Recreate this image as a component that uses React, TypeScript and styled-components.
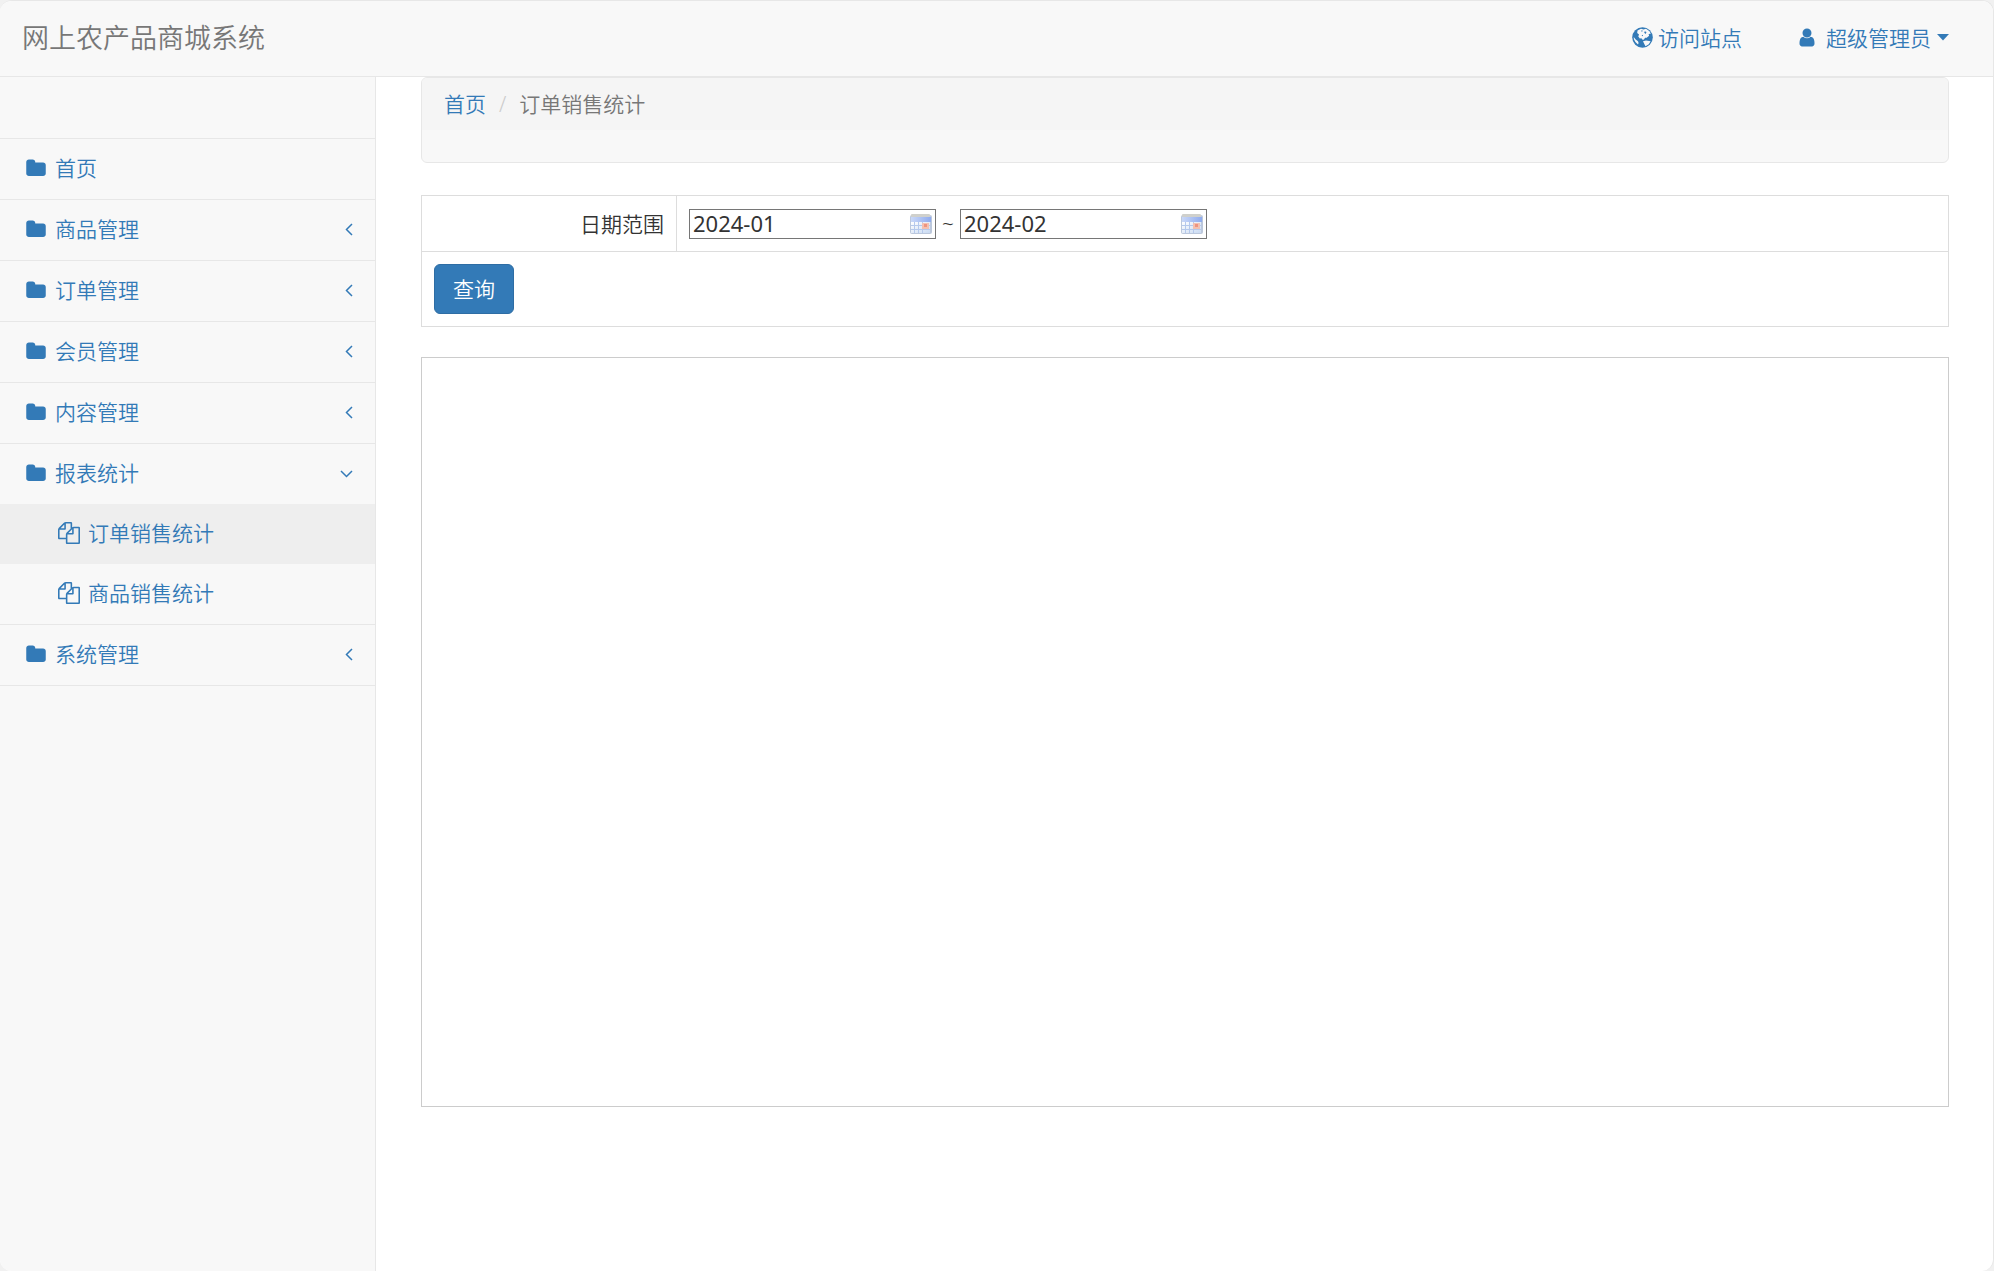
import React, { useState } from "react";
import styled, { createGlobalStyle } from "styled-components";

const blue = "#337ab7";
const line = "#e7e7e7";
const cellLine = "#dddddd";

const GlobalStyle = createGlobalStyle`
  *, *::before, *::after { box-sizing: border-box; }
  body {
    margin: 0;
    background: #f1f1f1;
    color: #333;
    font-family: "Noto Sans", "Noto Sans CJK SC", sans-serif;
    font-weight: 350;
    font-size: 21px;
    line-height: 30px;
  }
`;

const Page = styled.div`
  min-height: 100vh;
  display: flex;
  flex-direction: column;
  background: #fff;
  border: 1px solid ${line};
  border-width: 1px 1px 0 0;
  border-radius: 12px;
  overflow: hidden;
`;

const Header = styled.header`
  height: 76px;
  flex: none;
  display: flex;
  align-items: center;
  justify-content: space-between;
  padding: 0 44px 2px 22px;
  background: #f8f8f8;
  border-bottom: 1px solid ${line};
`;

const Brand = styled.a`
  color: #777;
  font-size: 27px;
  text-decoration: none;
`;

const TopLinks = styled.nav`
  display: flex;
  align-items: center;
  gap: 56px;
`;

const TopLink = styled.a`
  display: flex;
  align-items: center;
  gap: 5px;
  color: ${blue};
  text-decoration: none;
`;

const UserButton = styled.button`
  display: flex;
  align-items: center;
  gap: 6px;
  padding: 0;
  border: 0;
  background: none;
  color: ${blue};
  font: inherit;
  cursor: pointer;
  svg:first-child { margin-right: 4px; }
`;

const Body = styled.div`
  flex: 1;
  display: flex;
`;

const Sidebar = styled.aside`
  width: 376px;
  flex: none;
  background: #f8f8f8;
  border-right: 1px solid ${line};
`;

const Menu = styled.ul`
  margin: 0;
  padding: 0;
  list-style: none;
`;

const MenuItem = styled.li`
  border-bottom: 1px solid ${line};
`;

const SearchSlot = styled.li`
  height: 62px;
  border-bottom: 1px solid ${line};
`;

const MenuLink = styled.a<{ $sub?: boolean; $active?: boolean }>`
  height: 60px;
  display: flex;
  align-items: center;
  gap: ${(p) => (p.$sub ? 8 : 9)}px;
  padding: 0 22px 2px ${(p) => (p.$sub ? 58 : 26)}px;
  background: ${(p) => (p.$active ? "#eeeeee" : "transparent")};
  color: ${blue};
  text-decoration: none;
`;

const MenuText = styled.span`
  flex: 1;
`;

const Main = styled.main`
  flex: 1;
  min-width: 0;
  padding: 0 44px 0 45px;
`;

const CrumbBar = styled.nav`
  height: 86px;
  margin-bottom: 32px;
  background: #f8f8f8;
  border: 1px solid ${line};
  border-radius: 6px;
  overflow: hidden;
`;

const Crumbs = styled.ol`
  display: flex;
  margin: 0;
  padding: 11px 22px;
  list-style: none;
  background: #f5f5f5;
  color: #777;
  li + li::before {
    content: "/";
    padding: 0 13px;
    color: #ccc;
  }
  a {
    color: ${blue};
    text-decoration: none;
  }
`;

const FilterTable = styled.table`
  width: 100%;
  margin-bottom: 30px;
  border-collapse: collapse;
  th, td {
    height: 56px;
    padding: 12px;
    border: 1px solid ${cellLine};
    text-align: left;
  }
  th {
    width: 255px;
    font-weight: inherit;
    text-align: right;
  }
`;

const Range = styled.div`
  display: flex;
  align-items: center;
  gap: 6px;
`;

const DateField = styled.label`
  width: 247px;
  height: 30px;
  display: flex;
  align-items: center;
  padding: 0 3px 0 3px;
  border: 1px solid #767676;
`;

const DateInput = styled.input`
  flex: 1;
  min-width: 0;
  height: 28px;
  padding: 0 0 2px;
  border: 0;
  outline: 0;
  background: none;
  color: #333;
  font: inherit;
  font-size: 22px;
  font-weight: 400;
`;

const QueryButton = styled.button`
  height: 50px;
  padding: 0 18px;
  border: 1px solid #2e6da4;
  border-radius: 6px;
  background: ${blue};
  color: #fff;
  font: inherit;
  cursor: pointer;
`;

const ChartBox = styled.section`
  height: 750px;
  border: 1px solid #ccc;
`;

const FolderIcon = () => (
  <svg width="20" height="21" viewBox="64 0 1664 1792" fill="currentColor" aria-hidden="true">
    <path d="M1728 608v704q0 92-66 158t-158 66h-1216q-92 0-158-66t-66-158v-960q0-92 66-158t158-66h320q92 0 158 66t66 158v32h672q92 0 158 66t66 158z" />
  </svg>
);

const FilesIcon = () => (
  <svg width="22" height="22" viewBox="0 0 1792 1792" fill="currentColor" aria-hidden="true">
    <path d="M1696 384q40 0 68 28t28 68v1216q0 40-28 68t-68 28h-960q-40 0-68-28t-28-68v-288h-544q-40 0-68-28t-28-68v-672q0-40 20-88t48-76l408-408q28-28 76-48t88-20h416q40 0 68 28t28 68v328q68-40 128-40h416zm-544 213l-299 299h299v-299zm-640-384l-299 299h299v-299zm196 647l316-316v-416h-384v416q0 40-28 68t-68 28h-416v640h512v-256q0-40 20-88t48-76zm956 804v-1152h-384v416q0 40-28 68t-68 28h-416v640h896z" />
  </svg>
);

const UserIcon = () => (
  <svg width="18" height="21" viewBox="192 0 1408 1792" fill="currentColor" aria-hidden="true">
    <path d="M1536 1399q0 109-62.5 187t-150.5 78h-854q-88 0-150.5-78t-62.5-187q0-85 8.5-160.5t31.5-152 58.5-131 94-89 134.5-34.5q131 128 313 128t313-128q76 0 134.5 34.5t94 89 58.5 131 31.5 152 8.5 160.5zm-256-887q0 159-112.5 271.5t-271.5 112.5-271.5-112.5-112.5-271.5 112.5-271.5 271.5-112.5 271.5 112.5 112.5 271.5z" />
  </svg>
);

const GlobeIcon = () => (
  <svg width="21" height="21" viewBox="0 0 21 21" aria-hidden="true">
    <circle cx="10.500" cy="10.500" r="10.300" fill={blue} />
    <path fill="#f8f8f8" d="M5.500 3.500l3.500-1.700 2.500.6 2.500-.6 3.500 2.400 1.300 2.600-2.200.2.500 1.800-2.400 1.900-1.600 0-1.400 2-1.600-.2-.6-1.300-1.700.4-1.500-2.200.7-2-1.800-1.400zM11 14.200l3-.7 4.600.8-1.800 3-3.300 2-1.200-2.300zM1.700 10l2 2.600 2.300 1.600.6 1.800-.6 1.400-2.600-2.400-1.500-2.800z" />
    <path fill={blue} d="M9 3.800l1.600-.5-.5 1.600zM12.800 4.200l1.700.8-.8 2-1.500-1.200zM9.500 8.500l1.600-.8-.2 1.500z" />
  </svg>
);

const CaretIcon = () => (
  <svg width="12" height="7" viewBox="0 0 12 7" fill="currentColor" aria-hidden="true">
    <path d="M0 0h12L6 6.500z" />
  </svg>
);

const AngleIcon = ({ open }: { open?: boolean }) => (
  <svg width={open ? 13 : 8} height="13" viewBox={open ? "0 0 13 13" : "0 0 8 13"} fill="none" stroke="currentColor" strokeWidth="1.500" aria-hidden="true">
    <path d={open ? "M1 4l5.500 5.500L12 4" : "M7 1L1.500 6.500 7 12"} />
  </svg>
);

const CalendarIcon = () => (
  <svg width="22" height="20" viewBox="0 0 22 20" aria-hidden="true">
    <defs>
      <linearGradient id="sheet" x1="0" y1="0" x2="1" y2="1">
        <stop offset="0" stopColor="#ffffff" />
        <stop offset="1" stopColor="#c9daf2" />
      </linearGradient>
      <linearGradient id="band" x1="0" y1="0" x2="1" y2="0">
        <stop offset="0" stopColor="#c9d8f8" />
        <stop offset="1" stopColor="#8fabee" />
      </linearGradient>
    </defs>
    <rect x="0" y="1" width="22" height="19" rx="2" fill="#bcc8dc" />
    <rect x="1" y="0" width="19" height="3" rx="1" fill="#cfd0cc" />
    <rect x="1" y="3" width="20" height="5" fill="url(#band)" />
    <rect x="1" y="8" width="19" height="11" fill="url(#sheet)" />
    <path d="M4.500 8v11M8.500 8v11M12.500 8v11M1 11.500h19M1 15.500h19" stroke="#b5c9ec" />
    <rect x="12" y="9" width="7" height="6" fill="#f4c0b0" />
    <rect x="14" y="10" width="3" height="3" fill="#ee9480" />
  </svg>
);

type Entry = { label: string; children?: string[] };

const entries: Entry[] = [
  { label: "首页" },
  { label: "商品管理", children: [] },
  { label: "订单管理", children: [] },
  { label: "会员管理", children: [] },
  { label: "内容管理", children: [] },
  { label: "报表统计", children: ["订单销售统计", "商品销售统计"] },
  { label: "系统管理", children: [] },
];

const current = "订单销售统计";

function MonthField({ label, initial }: { label: string; initial: string }) {
  const [value, setValue] = useState(initial);
  return (
    <DateField>
      <DateInput aria-label={label} value={value} onChange={(e) => setValue(e.target.value)} />
      <CalendarIcon />
    </DateField>
  );
}

export default function App() {
  return (
    <>
      <GlobalStyle />
      <Page>
        <Header>
          <Brand href="#">网上农产品商城系统</Brand>
          <TopLinks>
            <TopLink href="#"><GlobeIcon />访问站点</TopLink>
            <UserButton type="button"><UserIcon />超级管理员<CaretIcon /></UserButton>
          </TopLinks>
        </Header>
        <Body>
          <Sidebar>
            <Menu>
              <SearchSlot />
              {entries.map(({ label, children }) => (
                <MenuItem key={label}>
                  <MenuLink href="#">
                    <FolderIcon />
                    <MenuText>{label}</MenuText>
                    {children && <AngleIcon open={children.length > 0} />}
                  </MenuLink>
                  {children && children.length > 0 && (
                    <Menu>
                      {children.map((child) => (
                        <li key={child}>
                          <MenuLink href="#" $sub $active={child === current}>
                            <FilesIcon />
                            <MenuText>{child}</MenuText>
                          </MenuLink>
                        </li>
                      ))}
                    </Menu>
                  )}
                </MenuItem>
              ))}
            </Menu>
          </Sidebar>
          <Main>
            <CrumbBar>
              <Crumbs>
                <li><a href="#">首页</a></li>
                <li>{current}</li>
              </Crumbs>
            </CrumbBar>
            <FilterTable>
              <tbody>
                <tr>
                  <th scope="row">日期范围</th>
                  <td>
                    <Range>
                      <MonthField label="开始月份" initial="2024-01" />
                      ~
                      <MonthField label="结束月份" initial="2024-02" />
                    </Range>
                  </td>
                </tr>
                <tr>
                  <td colSpan={2}><QueryButton type="button">查询</QueryButton></td>
                </tr>
              </tbody>
            </FilterTable>
            <ChartBox />
          </Main>
        </Body>
      </Page>
    </>
  );
}
